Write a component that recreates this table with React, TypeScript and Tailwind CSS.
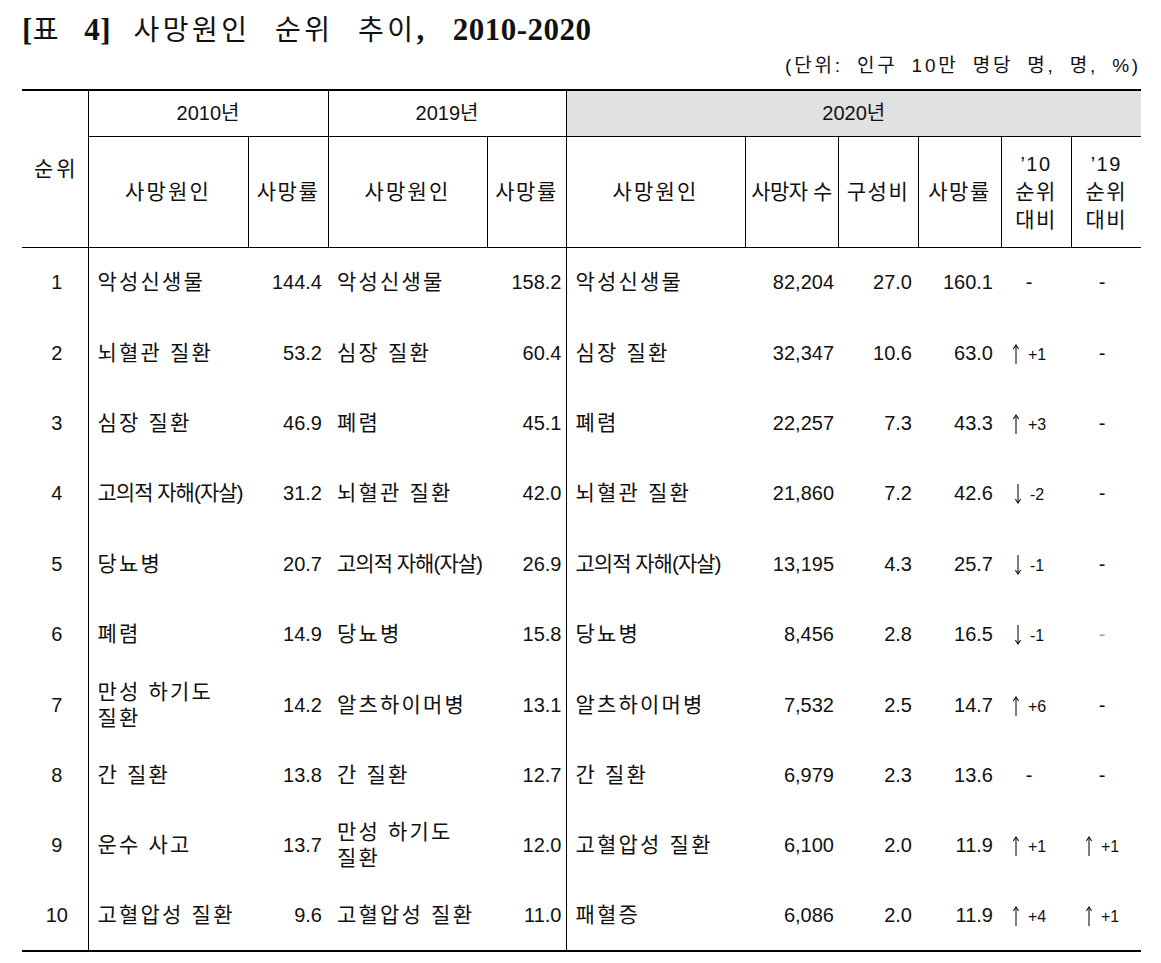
type Change = { dir: 'up' | 'down'; n: string } | null

type Row = {
  rank: number
  c10: string
  r10: string
  c19: string
  r19: string
  c20: string
  deaths: string
  share: string
  r20: string
  vs10: Change
  vs19: Change
  dimDash?: boolean
}

const rows: Row[] = [
  { rank: 1, c10: '악성신생물', r10: '144.4', c19: '악성신생물', r19: '158.2', c20: '악성신생물', deaths: '82,204', share: '27.0', r20: '160.1', vs10: null, vs19: null },
  { rank: 2, c10: '뇌혈관 질환', r10: '53.2', c19: '심장 질환', r19: '60.4', c20: '심장 질환', deaths: '32,347', share: '10.6', r20: '63.0', vs10: { dir: 'up', n: '+1' }, vs19: null },
  { rank: 3, c10: '심장 질환', r10: '46.9', c19: '폐렴', r19: '45.1', c20: '폐렴', deaths: '22,257', share: '7.3', r20: '43.3', vs10: { dir: 'up', n: '+3' }, vs19: null },
  { rank: 4, c10: '고의적 자해(자살)', r10: '31.2', c19: '뇌혈관 질환', r19: '42.0', c20: '뇌혈관 질환', deaths: '21,860', share: '7.2', r20: '42.6', vs10: { dir: 'down', n: '-2' }, vs19: null },
  { rank: 5, c10: '당뇨병', r10: '20.7', c19: '고의적 자해(자살)', r19: '26.9', c20: '고의적 자해(자살)', deaths: '13,195', share: '4.3', r20: '25.7', vs10: { dir: 'down', n: '-1' }, vs19: null },
  { rank: 6, c10: '폐렴', r10: '14.9', c19: '당뇨병', r19: '15.8', c20: '당뇨병', deaths: '8,456', share: '2.8', r20: '16.5', vs10: { dir: 'down', n: '-1' }, vs19: null, dimDash: true },
  { rank: 7, c10: '만성 하기도 질환', r10: '14.2', c19: '알츠하이머병', r19: '13.1', c20: '알츠하이머병', deaths: '7,532', share: '2.5', r20: '14.7', vs10: { dir: 'up', n: '+6' }, vs19: null },
  { rank: 8, c10: '간 질환', r10: '13.8', c19: '간 질환', r19: '12.7', c20: '간 질환', deaths: '6,979', share: '2.3', r20: '13.6', vs10: null, vs19: null },
  { rank: 9, c10: '운수 사고', r10: '13.7', c19: '만성 하기도 질환', r19: '12.0', c20: '고혈압성 질환', deaths: '6,100', share: '2.0', r20: '11.9', vs10: { dir: 'up', n: '+1' }, vs19: { dir: 'up', n: '+1' } },
  { rank: 10, c10: '고혈압성 질환', r10: '9.6', c19: '고혈압성 질환', r19: '11.0', c20: '패혈증', deaths: '6,086', share: '2.0', r20: '11.9', vs10: { dir: 'up', n: '+4' }, vs19: { dir: 'up', n: '+1' } },
]

function Arrow({ dir }: { dir: 'up' | 'down' }) {
  return (
    <svg width="8" height="20" viewBox="0 0 8 20" className="inline-block align-[-4px]" fill="none" stroke="#111" strokeWidth="1.1">
      {dir === 'up' ? (
        <>
          <line x1="4" y1="1" x2="4" y2="20" />
          <polyline points="1.3,5 4,1 6.7,5" />
        </>
      ) : (
        <>
          <line x1="4" y1="0" x2="4" y2="19" />
          <polyline points="1.3,15 4,19 6.7,15" />
        </>
      )}
    </svg>
  )
}

function ChangeCell({ c, dim, pr }: { c: Change; dim?: boolean; pr: string }) {
  return (
    <td className={`text-center whitespace-nowrap ${pr}`}>
      {c ? (
        <>
          <Arrow dir={c.dir} />
          <span className="ml-[8px] text-[16px]">{c.n}</span>
        </>
      ) : (
        <span className={dim ? 'text-gray-400' : ''}>-</span>
      )}
    </td>
  )
}

function Cause({ text }: { text: string }) {
  const squeeze = text.includes('(')
  return (
    <td
      className={`pl-[9px] pr-[4px] text-left text-[21px] leading-[26px] break-keep ${
        squeeze ? 'tracking-[-1px] whitespace-nowrap' : 'tracking-[2.2px]'
      }`}
    >
      {text}
    </td>
  )
}

export default function App() {
  return (
    <div className="w-[1161px] h-[963px] bg-white text-[#111] font-['Liberation_Sans','Noto_Sans_CJK_KR',sans-serif]">
      {/* Title */}
      <h1 className="h-[48px] pt-[12px] pl-[22px] text-[31px] leading-[36px] font-bold tracking-[0.5px] [word-spacing:14px] whitespace-nowrap font-['Liberation_Serif','Noto_Sans_CJK_KR',serif]">
        [<span className="text-[28px] font-normal tracking-[3.5px]">표</span> 4]{' '}
        <span className="text-[28px] font-normal tracking-[3.5px]">사망원인 순위 추이</span>,
        <span className="ml-[28px]">2010-2020</span>
      </h1>
      <div className="mt-[6px] pr-[20px] text-right text-[19px] leading-[24px] tracking-[2.8px] [word-spacing:6px]">
        (단위: 인구 10만 명당 명, 명, %)
      </div>

      {/* Table */}
      <table className="mt-[11px] ml-[22px] w-[1119px] table-fixed border-collapse border-t-2 border-b-2 border-black text-[20px]">
        <colgroup>
          <col className="w-[66px]" />
          <col className="w-[160px]" />
          <col className="w-[80px]" />
          <col className="w-[159px]" />
          <col className="w-[79px]" />
          <col className="w-[179px]" />
          <col className="w-[93px]" />
          <col className="w-[80px]" />
          <col className="w-[83px]" />
          <col className="w-[70px]" />
          <col className="w-[70px]" />
        </colgroup>
        <thead className="[&_th]:font-normal [&_th]:border-black">
          <tr className="h-[46px]">
            <th rowSpan={2} className="border-r border-b text-[21px] tracking-[3px] pl-[3px]">순위</th>
            <th colSpan={2} className="border-r border-b">2010년</th>
            <th colSpan={2} className="border-r border-b">2019년</th>
            <th colSpan={6} className="border-b bg-[#e1e1e1]">2020년</th>
          </tr>
          <tr className="h-[111px] text-[21px]">
            <th className="border-r border-b tracking-[2.2px]">사망원인</th>
            <th className="border-r border-b tracking-[1.5px]">사망률</th>
            <th className="border-r border-b tracking-[2.2px]">사망원인</th>
            <th className="border-r border-b tracking-[1.5px]">사망률</th>
            <th className="border-r border-b tracking-[2.2px]">사망원인</th>
            <th className="border-r border-b tracking-[-0.5px] whitespace-nowrap">사망자 수</th>
            <th className="border-r border-b tracking-[1.5px]">구성비</th>
            <th className="border-r border-b tracking-[1.5px]">사망률</th>
            <th className="border-r border-b leading-[28px] tracking-[1.5px]">
              <span className="text-[20px]">’10</span>
              <br />순위<br />대비
            </th>
            <th className="border-b leading-[28px] tracking-[1.5px]">
              <span className="text-[20px]">’19</span>
              <br />순위<br />대비
            </th>
          </tr>
        </thead>
        <tbody>
          {rows.map((r) => (
            <tr key={r.rank} className="h-[70.4px]">
              <td className="border-r border-black text-center pl-[4px]">{r.rank}</td>
              <Cause text={r.c10} />
              <td className="text-right pr-[6px]">{r.r10}</td>
              <Cause text={r.c19} />
              <td className="text-right pr-[4px] border-r border-black">{r.r19}</td>
              <Cause text={r.c20} />
              <td className="text-right pr-[4px]">{r.deaths}</td>
              <td className="text-right pr-[6px]">{r.share}</td>
              <td className="text-right pr-[8px]">{r.r20}</td>
              <ChangeCell c={r.vs10} pr="pr-[14px]" />
              <ChangeCell c={r.vs19} dim={r.dimDash} pr="pr-[8px]" />
            </tr>
          ))}
        </tbody>
      </table>
    </div>
  )
}
